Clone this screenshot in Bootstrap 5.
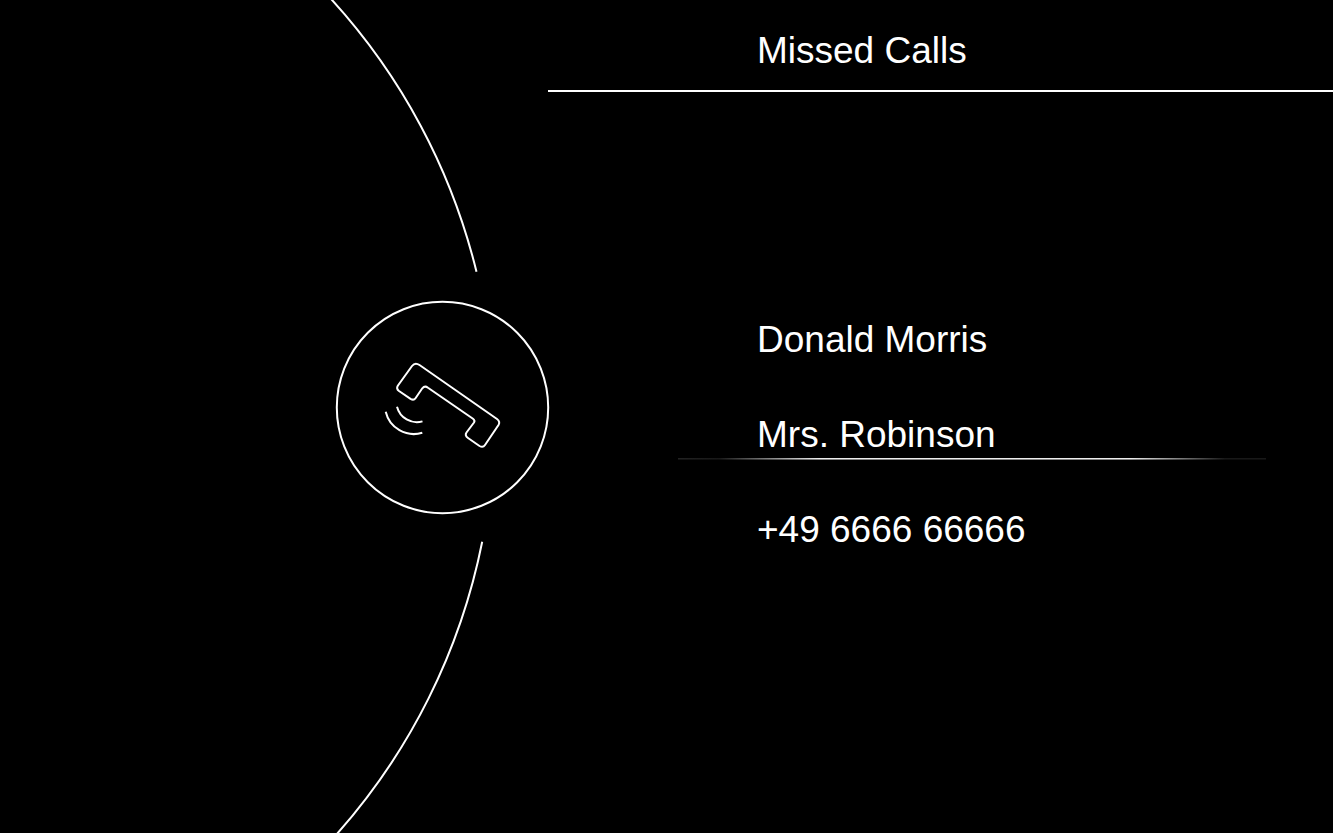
<!DOCTYPE html>
<html lang="en">
<head>
<meta charset="utf-8">
<meta name="viewport" content="width=device-width, initial-scale=1">
<title>Missed Calls</title>
<link href="https://cdn.jsdelivr.net/npm/bootstrap@5.3.0/dist/css/bootstrap.min.css" rel="stylesheet">
<style>
  body {
    background: #000;
    color: #fff;
    font-family: "Liberation Sans", Arial, sans-serif;
    font-size: 37px;
    line-height: 48px;
  }
  .phone-screen {
    display: grid;
    grid-template-columns: 548fr 785fr;
  }
  .dial { min-height: 0; }
  .dial svg {
    overflow: visible;
    fill: none;
    stroke: #fff;
    stroke-width: 2;
  }
  .screen-head {
    padding: 27px 16px 15px 209px;
    border-bottom: 2px solid #fff;
  }
  .screen-head h1 {
    font-size: 37px;
    font-weight: 400;
    line-height: 48px;
  }
  .calls {
    gap: 47px;
    padding: 0 67px 55px 130px;
  }
  .call-link {
    padding-left: 79px;
    color: #fff;
  }
  /* Selection line that fades out at both ends */
  .call-link.active::after {
    content: "";
    position: absolute;
    bottom: -1px;
    left: 0;
    right: 0;
    height: 2px;
    background:
      linear-gradient(to bottom, transparent 50%, rgba(0, 0, 0, .45) 50%),
      linear-gradient(to right, #222 0%, #181818 7%, #eee 24%, #eee 77%, #181818 93%, #181818 100%);
  }
</style>
</head>
<body>
<div class="phone-screen vh-100 overflow-hidden">
  <div class="dial">
    <svg class="d-block w-100 h-100" viewBox="0 0 548 833" preserveAspectRatio="xMaxYMid meet" role="img" aria-label="Missed call">
      <!-- Dial ring -->
      <path d="M330.2 -2A624 624 0 0 1 476.5 271.8M482.2 541.8A624 624 0 0 1 336 835"/>
      <circle cx="442.5" cy="407.5" r="105.7"/>
      <!-- Handset -->
      <path d="M412 366Q415 362 419.5 365L497 419Q500.5 421.6 498.5 425L485 445Q483 448 479.5 446L468 438Q464.5 435.5 466.5 432.5L474 422.5Q475.3 420.5 473 418.8L428 387.8Q424.8 385.3 422.3 388.3L415.5 398.2Q413.8 400.7 410.5 398.9L399 391Q396 388.7 397.8 385.7Z"/>
      <!-- Ringing waves -->
      <path d="M397 406.7A20.6 20.6 0 0 0 422.5 421.4M385.7 411.7A29 29 0 0 0 422.3 432.8"/>
    </svg>
  </div>
  <div class="d-flex flex-column">
    <header class="screen-head"><h1 class="m-0">Missed Calls</h1></header>
    <main class="flex-grow-1 d-flex flex-column">
      <ul class="calls list-unstyled m-0 flex-grow-1 d-flex flex-column justify-content-center">
        <li><a class="call-link d-block position-relative text-decoration-none" href="#donald-morris">Donald Morris</a></li>
        <li><a class="call-link active d-block position-relative text-decoration-none" href="#mrs-robinson" aria-current="true">Mrs. Robinson</a></li>
        <li><a class="call-link d-block position-relative text-decoration-none" href="#unknown-number">+49 6666 66666</a></li>
      </ul>
    </main>
  </div>
</div>
<script src="https://cdn.jsdelivr.net/npm/bootstrap@5.3.0/dist/js/bootstrap.bundle.min.js"></script>
</body>
</html>
